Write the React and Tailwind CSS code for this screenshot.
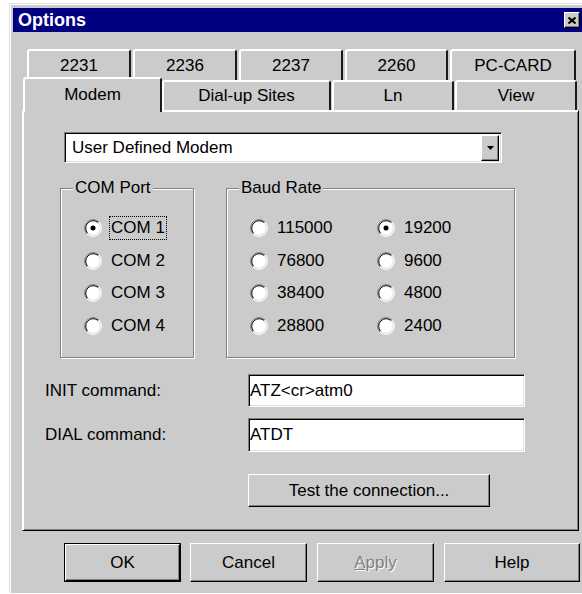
import React from 'react';

const raised =
  'border border-t-white border-l-white border-r-black border-b-black shadow-[inset_-1px_-1px_0_#808080]';
const sunken =
  'border border-t-[#808080] border-l-[#808080] border-r-white border-b-white shadow-[inset_1px_1px_0_#000,inset_-1px_-1px_0_#dfdfdf]';

const Radio = ({ checked }) => (
  <svg width="18" height="18" viewBox="0 0 18 18" className="shrink-0">
    <circle cx="9" cy="9" r="8" fill="#fff" />
    <path d="M2.99 15.01 A8.5 8.5 0 0 1 15.01 2.99" stroke="#808080" fill="none" />
    <path d="M3.7 14.3 A7.5 7.5 0 0 1 14.3 3.7" stroke="#000" fill="none" />
    <path d="M15.01 2.99 A8.5 8.5 0 0 1 2.99 15.01" stroke="#fff" fill="none" />
    <path d="M14.3 3.7 A7.5 7.5 0 0 1 3.7 14.3" stroke="#dfdfdf" fill="none" />
    {checked && <circle cx="9" cy="9" r="2.5" fill="#000" />}
  </svg>
);

const RadioRow = ({ label, checked, focused }) => (
  <div className="h-[32.5px] flex items-center gap-[9px]">
    <Radio checked={checked} />
    <span
      className={
        focused
          ? 'border border-dotted border-black px-[1px] leading-[22px] -ml-[2px]'
          : 'leading-[22px]'
      }
    >
      {label}
    </span>
  </div>
);

const GroupBox = ({ title, className, children }) => (
  <div
    className={`relative border border-[#808080] shadow-[inset_1px_1px_0_#fff,1px_1px_0_#fff] ${className}`}
  >
    <span className="absolute -top-[11px] left-[12px] px-[2px] bg-[#cbcbcb] leading-[20px]">
      {title}
    </span>
    {children}
  </div>
);

const BackTab = ({ label, w }) => (
  <div
    className={`${w} h-[31px] flex items-center justify-center border-t-2 border-l-2 border-r-2 border-t-white border-l-white border-r-[#1a1a1a] rounded-t-[3px]`}
  >
    {label}
  </div>
);

const FrontTab = ({ label, w, active }) =>
  active ? (
    <div
      className={`${w} relative z-10 -mt-[3px] h-[35px] pb-[2px] flex items-center justify-center bg-[#cbcbcb] border-t-2 border-l-2 border-r-2 border-t-white border-l-white border-r-[#1a1a1a] rounded-t-[3px]`}
    >
      {label}
    </div>
  ) : (
    <div
      className={`${w} h-[30px] flex items-center justify-center border-t-2 border-l-2 border-r-2 border-t-white border-l-white border-r-[#1a1a1a] rounded-t-[3px]`}
    >
      {label}
    </div>
  );

const Button = ({ children, className }) => (
  <div className={`${raised} flex items-center justify-center ${className}`}>{children}</div>
);

export default function App() {
  return (
    <div className="w-[582px] h-[594px] bg-white overflow-hidden font-['Liberation_Sans',Arial,sans-serif] text-[17px] text-black">
      <div className="ml-[9px] mt-[3px] w-[580px] h-[590px] bg-[#cbcbcb] border-t border-l border-[#dfdfdf] shadow-[inset_1px_1px_0_#fff] pt-[4px] pl-[3px]">
        {/* caption */}
        <div className="w-[569px] h-[24px] bg-[#000080] flex items-center justify-between pl-[5px] pr-[2px]">
          <span className="text-white font-bold text-[18px] leading-none">Options</span>
          <div className={`${raised} bg-[#cbcbcb] w-[16px] h-[16px] flex items-center justify-center`}>
            <svg width="8" height="7" viewBox="0 0 8 7">
              <path d="M0.5 0.5 L7.5 6.5 M7.5 0.5 L0.5 6.5" stroke="#000" strokeWidth="2" />
            </svg>
          </div>
        </div>

        {/* tabs */}
        <div className="mt-[17px]">
          <div className="flex gap-[2px] pl-[14px]">
            <BackTab label="2231" w="w-[104px]" />
            <BackTab label="2236" w="w-[104px]" />
            <BackTab label="2237" w="w-[104px]" />
            <BackTab label="2260" w="w-[103px]" />
            <BackTab label="PC-CARD" w="w-[126px]" />
          </div>
          <div className="flex items-start h-[30px] pl-[10px]">
            <FrontTab label="Modem" w="w-[139px]" active />
            <FrontTab label="Dial-up Sites" w="w-[169px]" />
            <div className="w-[1px]" />
            <FrontTab label="Ln" w="w-[122px]" />
            <div className="w-[1px]" />
            <FrontTab label="View" w="w-[122px]" />
          </div>
        </div>

        {/* page */}
        <div className="ml-[9px] w-[557px] h-[421px] border border-t-white border-l-white border-r-black border-b-black shadow-[inset_1px_1px_0_#fff,inset_-1px_-1px_0_#808080]">
          <div className={`${sunken} mt-[21px] ml-[41px] w-[438px] h-[31px] bg-white flex items-center justify-between pl-[7px] pr-[2px]`}>
            <span className="leading-none">User Defined Modem</span>
            <div className={`${raised} bg-[#cbcbcb] w-[18px] h-[26px] flex items-center justify-center`}>
              <svg width="7" height="4" viewBox="0 0 7 4">
                <polygon points="0,0 7,0 3.5,4" fill="#000" />
              </svg>
            </div>
          </div>

          <div className="flex mt-[25px] pl-[37px]">
            <GroupBox title="COM Port" className="w-[134px] h-[170px] pt-[23px] pl-[23px]">
              <RadioRow label="COM 1" checked focused />
              <RadioRow label="COM 2" />
              <RadioRow label="COM 3" />
              <RadioRow label="COM 4" />
            </GroupBox>
            <GroupBox title="Baud Rate" className="ml-[32px] w-[289px] h-[170px] pt-[23px] pl-[23px]">
              <div className="grid grid-cols-[127px_127px]">
                <RadioRow label="115000" />
                <RadioRow label="19200" checked />
                <RadioRow label="76800" />
                <RadioRow label="9600" />
                <RadioRow label="38400" />
                <RadioRow label="4800" />
                <RadioRow label="28800" />
                <RadioRow label="2400" />
              </div>
            </GroupBox>
          </div>

          <div className="mt-[16px] pl-[22px] flex items-center">
            <span className="w-[203px]">INIT command:</span>
            <div className={`${sunken} w-[277px] h-[33px] bg-white flex items-center pl-[1px]`}>
              ATZ&lt;cr&gt;atm0
            </div>
          </div>
          <div className="mt-[11px] pl-[22px] flex items-center">
            <span className="w-[203px]">DIAL command:</span>
            <div className={`${sunken} w-[277px] h-[34px] bg-white flex items-center pl-[1px]`}>
              ATDT
            </div>
          </div>

          <Button className="mt-[22px] ml-[225px] w-[242px] h-[33px]">Test the connection...</Button>
        </div>

        {/* dialog buttons */}
        <div className="flex mt-[12px] pl-[51px]">
          <div className="border border-black w-[117px] h-[39px]">
            <Button className="w-full h-full">OK</Button>
          </div>
          <Button className="ml-[9px] w-[117px] h-[39px]">Cancel</Button>
          <Button className="ml-[10px] w-[117px] h-[39px] text-[#808080] [text-shadow:1px_1px_0_#fff]">
            <span>
              <u>A</u>pply
            </span>
          </Button>
          <Button className="ml-[10px] w-[136px] h-[39px]">Help</Button>
        </div>
      </div>
    </div>
  );
}
